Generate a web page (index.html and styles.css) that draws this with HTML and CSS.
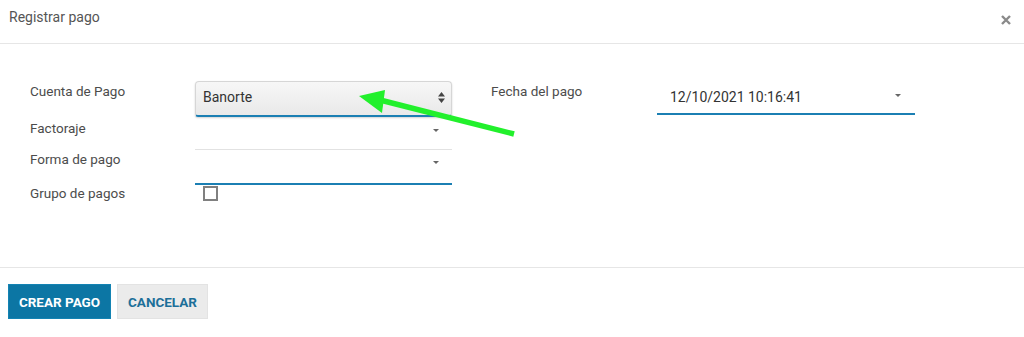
FILE: index.html
```html
<!DOCTYPE html>
<html lang="es">
<head>
<meta charset="utf-8">
<title>Registrar pago</title>
<link rel="stylesheet" href="styles.css">
</head>
<body>
<div class="modal">
  <header class="modal-header">
    <h4 class="modal-title">Registrar pago</h4>
    <button class="close" aria-label="Cerrar">
      <svg width="10" height="10" viewBox="0 0 10 10"><path d="M1 1L9 9M9 1L1 9" stroke="#8a8a8a" stroke-width="2.4" stroke-linecap="butt"/></svg>
    </button>
  </header>
  <main class="modal-body">
    <div class="group left">
      <div class="row r1">
        <label class="lbl">Cuenta de Pago</label>
        <div class="select">
          <span>Banorte</span>
          <svg class="updown" width="7" height="11" viewBox="0 0 7 11"><path d="M3.5 0L7 4.5H0Z M3.5 11L0 6.5H7Z" fill="#444"/></svg>
        </div>
      </div>
      <div class="row r2">
        <label class="lbl">Factoraje</label>
        <div class="field gray"><span class="caret"></span></div>
      </div>
      <div class="row r3">
        <label class="lbl">Forma de pago</label>
        <div class="field blue"><span class="caret"></span></div>
      </div>
      <div class="row r4">
        <label class="lbl">Grupo de pagos</label>
        <div class="checkwrap"><span class="checkbox"></span></div>
      </div>
    </div>
    <div class="group right">
      <div class="row r1">
        <label class="lbl rl">Fecha del pago</label>
        <div class="datefield">
          <span>12/10/2021 10:16:41</span>
          <span class="caret"></span>
        </div>
      </div>
    </div>
    <svg class="annot" width="170" height="60" viewBox="0 0 170 60">
      <path d="M164 56L30 22" stroke="#22f02c" stroke-width="5.5" stroke-linecap="butt"/>
      <path d="M9 18L35 12L32 35Z" fill="#22f02c"/>
    </svg>
  </main>
  <footer class="modal-footer">
    <button class="btn primary">CREAR PAGO</button>
    <button class="btn secondary">CANCELAR</button>
  </footer>
</div>
</body>
</html>
```
FILE: styles.css
```css
* { box-sizing: border-box; }
html, body { margin: 0; padding: 0; background: #fff; }
body { font-family: Roboto, "Liberation Sans", Arial, sans-serif; color: #4c4c4c; }

.modal { width: 1024px; height: 337px; }

.modal-header {
  height: 44px;
  border-bottom: 1px solid #e6e6e6;
  display: flex;
  align-items: flex-start;
  justify-content: space-between;
  padding: 9px 13px 0 9px;
}
.modal-title { margin: 0; font-size: 14px; font-weight: 400; color: #555; line-height: 17px; }
.close { border: 0; background: none; padding: 0; margin-top: 6px; width: 10px; height: 10px; display: block; cursor: pointer; }
.close svg { display: block; }

.modal-body {
  position: relative;
  height: 224px;
  border-bottom: 1px solid #e6e6e6;
  display: flex;
  padding: 37px 0 0 30px;
}
.group { display: flex; flex-direction: column; }
.left { width: 461px; }
.row { display: flex; }
.lbl { font-size: 13.5px; line-height: 15px; color: #4c4c4c; width: 165px; flex: none; }
.r1 { height: 37px; }
.r1 .lbl { padding-top: 3px; }
.r2 { height: 32px; }
.r2 .lbl { padding-top: 3px; }
.r3 { height: 35px; }
.r3 .lbl { padding-top: 2px; }
.r4 { height: 20px; }
.r4 .lbl { padding-top: 1px; }

.select {
  width: 257px;
  height: 36px;
  border: 1px solid #d6d6d6;
  border-bottom: 2px solid #1b7fb3;
  border-radius: 4px 4px 3px 3px;
  background: linear-gradient(#f7f7f7, #e9e9e9);
  box-shadow: 0 1px 2px rgba(0,0,0,0.18);
  display: flex;
  align-items: center;
  justify-content: space-between;
  padding: 0 6px 3px 7px;
  font-size: 14px;
  color: #333;
}
.updown { display: block; margin-top: 1px; }

.field {
  width: 257px;
  display: flex;
  justify-content: flex-end;
  padding: 11px 13px 0 0;
}
.field.gray { height: 32px; border-bottom: 1px solid #e2e2e2; }
.field.blue { height: 35px; border-bottom: 2px solid #1b7fb3; }
.caret {
  width: 0; height: 0;
  border-left: 3.5px solid transparent;
  border-right: 3.5px solid transparent;
  border-top: 3.5px solid #666;
  display: block;
}

.checkwrap { padding: 1px 0 0 8px; }
.checkbox { display: block; width: 15px; height: 15px; border: 2px solid #808080; background: #fff; }

.rl { width: 166px; }
.datefield {
  width: 258px;
  height: 34px;
  border-bottom: 2px solid #1b7fb3;
  display: flex;
  justify-content: space-between;
  align-items: flex-start;
  padding: 8px 14px 0 13px;
  font-size: 14px;
  color: #333;
}
.datefield .caret { margin-top: 5px; }

.annot { position: absolute; left: 350px; top: 34px; }

.modal-footer {
  display: flex;
  align-items: center;
  gap: 6px;
  padding: 16px 0 0 8px;
}
.btn {
  font-family: Roboto, "Liberation Sans", Arial, sans-serif;
  font-size: 13.5px;
  font-weight: 700;
  height: 35px;
  border: 1px solid transparent;
  padding: 0 8px;
  cursor: pointer;
}
.primary { background: #0c76a4; color: #fff; width: 103px; border-color: #1383b3; }
.secondary { background: #ebebeb; color: #1d6f99; width: 91px; border-color: #e3e3e3; }
```
